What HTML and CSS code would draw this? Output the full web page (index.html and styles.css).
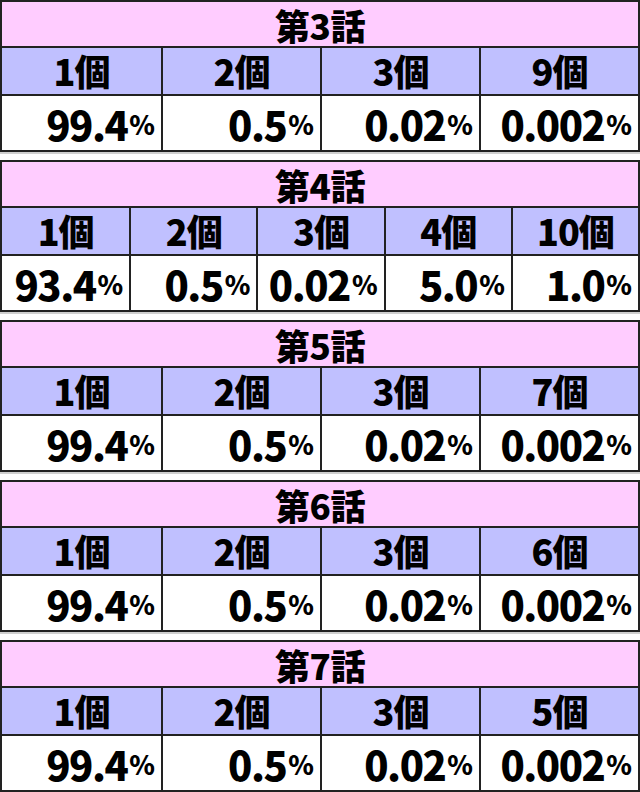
FILE: index.html
```html
<!DOCTYPE html>
<html lang="ja">
<head>
<meta charset="utf-8">
<link rel="stylesheet" href="styles.css">
</head>
<body>
<div class="page">
  <section class="tbl">
    <div class="title">第3話</div>
    <div class="row cols4 heads"><div class="cell">1個</div><div class="cell">2個</div><div class="cell">3個</div><div class="cell">9個</div></div>
    <div class="row cols4 vals"><div class="cell">99.4<span class="pct">%</span></div><div class="cell">0.5<span class="pct">%</span></div><div class="cell">0.02<span class="pct">%</span></div><div class="cell">0.002<span class="pct">%</span></div></div>
  </section>
  <section class="tbl">
    <div class="title">第4話</div>
    <div class="row cols5 heads"><div class="cell">1個</div><div class="cell">2個</div><div class="cell">3個</div><div class="cell">4個</div><div class="cell">10個</div></div>
    <div class="row cols5 vals"><div class="cell">93.4<span class="pct">%</span></div><div class="cell">0.5<span class="pct">%</span></div><div class="cell">0.02<span class="pct">%</span></div><div class="cell">5.0<span class="pct">%</span></div><div class="cell">1.0<span class="pct">%</span></div></div>
  </section>
  <section class="tbl">
    <div class="title">第5話</div>
    <div class="row cols4 heads"><div class="cell">1個</div><div class="cell">2個</div><div class="cell">3個</div><div class="cell">7個</div></div>
    <div class="row cols4 vals"><div class="cell">99.4<span class="pct">%</span></div><div class="cell">0.5<span class="pct">%</span></div><div class="cell">0.02<span class="pct">%</span></div><div class="cell">0.002<span class="pct">%</span></div></div>
  </section>
  <section class="tbl">
    <div class="title">第6話</div>
    <div class="row cols4 heads"><div class="cell">1個</div><div class="cell">2個</div><div class="cell">3個</div><div class="cell">6個</div></div>
    <div class="row cols4 vals"><div class="cell">99.4<span class="pct">%</span></div><div class="cell">0.5<span class="pct">%</span></div><div class="cell">0.02<span class="pct">%</span></div><div class="cell">0.002<span class="pct">%</span></div></div>
  </section>
  <section class="tbl">
    <div class="title">第7話</div>
    <div class="row cols4 heads"><div class="cell">1個</div><div class="cell">2個</div><div class="cell">3個</div><div class="cell">5個</div></div>
    <div class="row cols4 vals"><div class="cell">99.4<span class="pct">%</span></div><div class="cell">0.5<span class="pct">%</span></div><div class="cell">0.02<span class="pct">%</span></div><div class="cell">0.002<span class="pct">%</span></div></div>
  </section>
</div>
</body>
</html>
```

FILE: styles.css
```css
html, body {
  margin: 0;
  padding: 0;
  background: #ffffff;
}

.page {
  width: 640px;
  display: flex;
  flex-direction: column;
  gap: 8px;
  font-family: "Noto Sans CJK JP", "Noto Sans", sans-serif;
  font-weight: 900;
  color: #000;
}

.tbl {
  width: 640px;
  box-sizing: border-box;
  border: 2px solid #222;
  box-shadow: 0 2px 0 #d0d0d0;
  display: flex;
  flex-direction: column;
}

.title {
  height: 44px;
  box-sizing: border-box;
  padding-top: 3px;
  background: #ffccff;
  display: flex;
  align-items: center;
  justify-content: center;
  font-size: 35px;
  line-height: 1.15;
  letter-spacing: -0.5px;
}

.row {
  display: grid;
  border-top: 2px solid #222;
}

.cols4 { grid-template-columns: repeat(4, 1fr); }
.cols5 { grid-template-columns: repeat(5, 1fr); }

.cell {
  display: flex;
  align-items: center;
  line-height: 1.2;
  white-space: nowrap;
}

.cell + .cell {
  border-left: 2px solid #222;
}

.heads {
  height: 46px;
  background: #c0c0ff;
}

.heads .cell {
  justify-content: center;
  font-size: 36px;
  letter-spacing: -1px;
}

.vals {
  height: 54px;
  background: #ffffff;
}

.vals .cell {
  justify-content: flex-end;
  align-items: center;
  padding: 2px 6px 0 0;
  font-size: 40px;
  letter-spacing: -1.5px;
}

.pct {
  font-size: 26px;
  letter-spacing: 0;
  margin-left: 2px;
}
```
